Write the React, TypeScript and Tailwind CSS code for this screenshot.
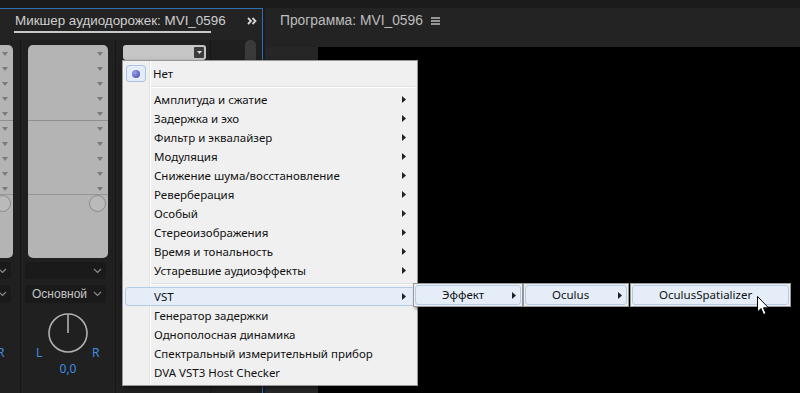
import React from "react";

const Tri = () => (
  <svg width="6" height="4" viewBox="0 0 6 4" className="block">
    <path d="M0 0 L6 0 L3 4 Z" fill="#7a7a7a" />
  </svg>
);

const Chevron = () => (
  <svg width="9" height="6" viewBox="0 0 9 6" className="block">
    <path d="M1 1 L4.5 4.5 L8 1" stroke="#8a8a8a" strokeWidth="1.2" fill="none" />
  </svg>
);

const Arrow = () => (
  <svg width="4" height="7" viewBox="0 0 4 7" className="block">
    <path d="M0 0 L4 3.5 L0 7 Z" fill="#222" />
  </svg>
);

function GrayArea() {
  return (
    <div className="h-[213px] bg-[#b4b4b4] rounded-[5px] flex flex-col overflow-hidden">
      <div className="h-[76px] flex flex-col items-end pr-[5px] pt-[7px] gap-[11px] border-b border-[#8f8f8f]">
        {[0, 1, 2, 3, 4].map((i) => (
          <Tri key={i} />
        ))}
      </div>
      <div className="h-[74px] flex flex-col items-end pr-[5px] pt-[6px] gap-[11px] border-b border-[#979797]">
        {[0, 1, 2, 3, 4].map((i) => (
          <Tri key={i} />
        ))}
      </div>
      <div className="flex justify-end pr-[2px]">
        <div className="w-[17px] h-[17px] rounded-full border border-[#8a8a8a] bg-[#bababa]" />
      </div>
    </div>
  );
}

function Strip({ top }: { top?: boolean }) {
  return (
    <div className="w-[95px] shrink-0 flex flex-col border-l border-[#161616] bg-[#202020]">
      <div className="px-[7px] pt-[5px] h-[222px]">
        {top ? (
          <div className="h-[15px] w-[83px] rounded-[3px] bg-[#c6c6c6] flex justify-end items-center pr-[2px]">
            <div className="w-[10px] h-[11px] bg-[#3c3c3c] rounded-[1px] flex items-center justify-center">
              <svg width="5" height="3" viewBox="0 0 5 3"><path d="M0 0 L5 0 L2.5 3 Z" fill="#ddd" /></svg>
            </div>
          </div>
        ) : (
          <GrayArea />
        )}
      </div>
      <div className="px-[4px] flex flex-col gap-[6px]">
        <div className="h-[17px] w-[81px] bg-[#1a1a1a] rounded-[2px] flex items-center justify-end pr-[4px]">
          <Chevron />
        </div>
        <div className="h-[18px] w-[81px] bg-[#1a1a1a] rounded-[2px] flex items-center justify-between pl-[7px] pr-[4px]">
          <span className="text-[12px] text-[#c4c4c4] leading-none font-['Liberation_Sans',sans-serif]">Основной</span>
          <Chevron />
        </div>
      </div>
      <div className="relative h-[80px] flex flex-col items-center">
        <svg width="44" height="44" viewBox="0 0 44 44" className="mt-[8px]">
          <circle cx="22" cy="22" r="19" stroke="#b0b0b0" strokeWidth="1.6" fill="none" />
          <line x1="22" y1="22" x2="22" y2="3" stroke="#b0b0b0" strokeWidth="1.6" />
        </svg>
        <div className="absolute left-[15px] top-[44px] text-[12px] text-[#3f8ee0] leading-none">L</div>
        <div className="absolute left-[71px] top-[44px] text-[12px] text-[#3f8ee0] leading-none">R</div>
        <div className="text-[12px] text-[#3f8ee0] leading-none mt-[8px]">0,0</div>
      </div>
    </div>
  );
}

function Item({ label, arrow, hl }: { label: string; arrow?: boolean; hl?: boolean }) {
  return (
    <div
      className={
        "h-[19px] mx-[2px] flex items-center rounded-[3px] border " +
        (hl ? "bg-[#e4edf8] border-[#b4cbe8]" : "border-transparent")
      }
    >
      <span className="pl-[28px] flex-1 text-[11.5px] text-[#111] leading-none whitespace-nowrap">{label}</span>
      {arrow && (
        <span className="pr-[8px]">
          <Arrow />
        </span>
      )}
    </div>
  );
}

function Sep() {
  return <div className="ml-[28px] mr-[2px] border-t border-[#e0e0e0] border-b border-b-white" />;
}

function SubBox({ label, arrow, w }: { label: string; arrow?: boolean; w: string }) {
  return (
    <div className={"h-[24px] bg-[#f0f0f0] border border-[#979797] p-[1px] shadow-[2px_2px_3px_rgba(0,0,0,0.4)] " + w}>
      <div className="h-full rounded-[3px] border border-[#b4cbe8] bg-[#e4edf8] flex items-center">
        <span className="pl-[26px] flex-1 text-[11.5px] text-[#111] leading-none whitespace-nowrap">{label}</span>
        {arrow && (
          <span className="pr-[4px]">
            <Arrow />
          </span>
        )}
      </div>
    </div>
  );
}

export default function App() {
  const items1 = [
    "Амплитуда и сжатие",
    "Задержка и эхо",
    "Фильтр и эквалайзер",
    "Модуляция",
    "Снижение шума/восстановление",
    "Реверберация",
    "Особый",
    "Стереоизображения",
    "Время и тональность",
    "Устаревшие аудиоэффекты",
  ];
  const items2 = [
    "Генератор задержки",
    "Однополосная динамика",
    "Спектральный измерительный прибор",
    "DVA VST3 Host Checker",
  ];
  return (
    <div className="relative w-[800px] h-[393px] overflow-hidden bg-[#1b1b1b] font-['Noto_Sans',sans-serif]">
      <div className="h-[8px] bg-[#1b1b1b]" />
      <div className="flex h-[385px]">
        {/* left panel */}
        <div className="w-[263px] shrink-0 flex flex-col border-t border-r border-[#2f6db4] bg-[#232323]">
          <div className="h-[31px] flex items-start shrink-0">
            <div className="ml-[14px] mt-[4px] pb-[3px] w-[197px] border-b-2 border-[#c9c9c9] flex items-center gap-[10px]">
              <span className="text-[13.4px] text-[#cfcfcf] leading-[15px] whitespace-nowrap pl-[1px] font-['Liberation_Sans',sans-serif]">
                Микшер аудиодорожек: MVI_0596
              </span>
              <svg width="9" height="8" viewBox="0 0 9 8"><path d="M0 1H9M0 4H9M0 7H9" stroke="#bdbdbd" strokeWidth="1.3" /></svg>
            </div>
            <svg width="10" height="8" viewBox="0 0 10 8" className="ml-auto mr-[5px] mt-[8px]">
              <path d="M1 1 L4 4 L1 7 M5.5 1 L8.5 4 L5.5 7" stroke="#d8d8d8" strokeWidth="1.8" fill="none" />
            </svg>
          </div>
          <div className="flex flex-1 overflow-hidden">
            <div className="flex ml-[-75px]">
              <Strip />
              <Strip />
              <Strip top />
            </div>
            <div className="flex-1 border-l border-[#161616] bg-[#1f1f1f] flex justify-end pr-[6px]">
              <div className="w-[11px] h-[300px] bg-[#3a3a3a] rounded-[5px]" />
            </div>
          </div>
        </div>
        {/* right panel */}
        <div className="flex-1 ml-[2px] flex flex-col bg-[#232323]">
          <div className="h-[39px] flex items-start pl-[15px] pt-[5px] gap-[8px] shrink-0">
            <span className="text-[13.8px] text-[#bdbdbd] leading-[15px] whitespace-nowrap font-['Liberation_Sans',sans-serif]">Программа: MVI_0596</span>
            <svg width="9" height="8" viewBox="0 0 9 8" className="mt-[4px]"><path d="M0 1H9M0 4H9M0 7H9" stroke="#bdbdbd" strokeWidth="1.3" /></svg>
          </div>
          <div className="flex-1 flex">
            <div className="w-[53px] shrink-0 bg-[#262626]" />
            <div className="flex-1 bg-black" />
          </div>
        </div>
      </div>

      {/* context menu */}
      <div className="absolute left-[122px] top-[60px] w-[296px] h-[326px] bg-[#f0f0f0] border border-[#979797] shadow-[2px_2px_4px_rgba(0,0,0,0.5)] pt-[2px]">
        <div className="absolute left-[26px] top-0 bottom-0 w-[2px] border-l border-[#e2e3e3] border-r border-r-white" />
        <div className="relative flex flex-col">
          <div className="h-[21px] mx-[2px] flex items-center">
            <div className="w-[20px] h-[17px] ml-[1px] rounded-[3px] border border-[#a9c4e6] bg-[#e3ecf8] flex items-center justify-center">
              <div className="w-[8px] h-[8px] rounded-full bg-[radial-gradient(circle_at_35%_35%,#9aa0f0,#3b3f9c)]" />
            </div>
            <span className="pl-[7px] text-[11.5px] text-[#111] leading-none">Нет</span>
          </div>
          <div className="h-[6px] flex flex-col justify-center">
            <Sep />
          </div>
          {items1.map((t) => (
            <Item key={t} label={t} arrow />
          ))}
          <div className="h-[7px] flex flex-col justify-center">
            <Sep />
          </div>
          <Item label="VST" arrow hl />
          {items2.map((t) => (
            <Item key={t} label={t} />
          ))}
        </div>
      </div>

      {/* submenus */}
      <div className="absolute left-[413px] top-[283px] flex">
        <SubBox label="Эффект" arrow w="w-[110px]" />
        <SubBox label="Oculus" arrow w="w-[106px]" />
        <div className="w-[1px]" />
        <SubBox label="OculusSpatializer" w="w-[161px]" />
      </div>

      {/* cursor */}
      <svg className="absolute left-[757px] top-[296px]" width="13" height="20" viewBox="0 0 13 20">
        <path d="M0.5 0.5 L0.5 16 L4 12.5 L6.5 18.5 L9 17.5 L6.5 11.8 L11.5 11.8 Z" fill="white" stroke="black" strokeWidth="1" />
      </svg>
    </div>
  );
}
